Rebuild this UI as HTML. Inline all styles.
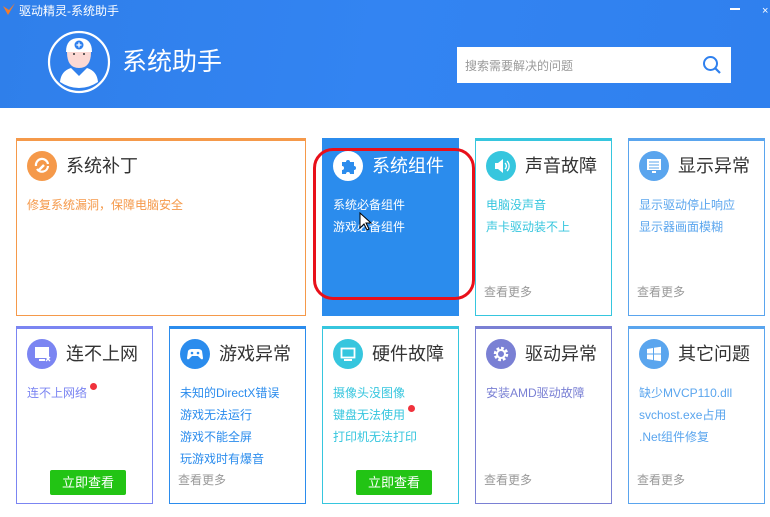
<!DOCTYPE html>
<html><head><meta charset="utf-8"><style>
*{margin:0;padding:0;box-sizing:border-box}
body{width:770px;height:517px;background:#fff;font-family:"Liberation Sans","Noto Sans CJK SC",sans-serif;position:relative;overflow:hidden}
.hdr{position:absolute;left:0;top:0;width:770px;height:108px;background:linear-gradient(100deg,#2f7fea 0%,#3384f2 50%,#2f80ee 100%)}
.tt{position:absolute;left:19px;top:2px;color:#fff;font-size:12px;line-height:18px}
.card{position:absolute;border:1px solid;border-top-width:3px;background:#fff}
.ic{position:absolute;left:10px;top:10px;width:30px;height:30px;border-radius:50%}
.ti{position:absolute;left:49px;top:11px;font-size:18px;line-height:28px;color:#333}
.lk{position:absolute;left:10px;font-size:12px;line-height:16px;white-space:nowrap}
.more{position:absolute;left:8px;bottom:15px;font-size:12px;color:#999}
.btn{position:absolute;left:33px;top:141px;width:76px;height:25px;background:#22c414;border-radius:2px;color:#fff;font-size:13px;text-align:center;line-height:25px}
.dot{display:inline-block;width:7px;height:7px;border-radius:50%;background:#f0323c;vertical-align:top;margin-left:3px;margin-top:-2px}
</style></head><body>
<div class="hdr">
<svg style="position:absolute;left:2px;top:2px" width="14" height="14" viewBox="0 0 14 14"><path d="M1 4 L6 13 L13 1 L7 8 Z" fill="#f57c2a"/></svg>
<div class="tt">驱动精灵-系统助手</div>
<div style="position:absolute;left:730px;top:8px;width:10px;height:2px;background:#fff"></div>
<div style="position:absolute;left:762px;top:5px;color:#fff;font-size:11px">×</div>
<svg style="position:absolute;left:47px;top:30px" width="64" height="64" viewBox="0 0 64 64">
<circle cx="32" cy="32" r="30" fill="none" stroke="#fff" stroke-width="2.2"/>
<path d="M19 22 Q19 8 32 8 Q45 8 45 22 Z" fill="#fff"/>
<circle cx="32" cy="15" r="4.5" fill="#2f80ee"/><path d="M32 12.5v5M29.5 15h5" stroke="#fff" stroke-width="1.3"/>
<path d="M20 22 H44 Q44 38 32 38 Q20 38 20 22Z" fill="#fcd9d4"/>
<circle cx="27" cy="24" r="1" fill="#333"/><circle cx="37" cy="24" r="1" fill="#333"/>
<path d="M13 52 Q14 41 24 38 L32 46 L40 38 Q50 41 51 52 Q42 58 32 58 Q22 58 13 52Z" fill="#fff"/>
</svg>
<div style="position:absolute;left:122px;top:46px;color:#fff;font-size:25px;line-height:32px">系统助手</div>
<div style="position:absolute;left:457px;top:47px;width:274px;height:36px;background:#fff">
<div style="position:absolute;left:8px;top:10px;font-size:12px;color:#999">搜索需要解决的问题</div>
<svg style="position:absolute;left:245px;top:8px" width="20" height="20" viewBox="0 0 20 20"><circle cx="8.5" cy="8.5" r="6.5" fill="none" stroke="#2f80ee" stroke-width="2"/><path d="M13.5 13.5L18 18" stroke="#2f80ee" stroke-width="2.2"/></svg>
</div>
</div>

<div class="card" style="left:16px;top:138px;width:290px;height:178px;border-color:#f5994a">
<div class="ic" style="background:#f5994a"><svg width="30" height="30" viewBox="0 0 30 30"><path d="M9 15 A6 6 0 0 1 21 13" fill="none" stroke="#fff" stroke-width="2.2"/><path d="M21 15 A6 6 0 0 1 10 18" fill="none" stroke="#fff" stroke-width="2.2"/><path d="M12 19l5-5" stroke="#fff" stroke-width="2.5"/></svg></div>
<div class="ti">系统补丁</div>
<div class="lk" style="top:56px;color:#f5994a">修复系统漏洞，保障电脑安全</div>
</div>

<div class="card" style="left:322px;top:138px;width:137px;height:178px;border-color:#2b8ced;background:#2b8ced">
<div class="ic" style="background:#fff"><svg width="30" height="30" viewBox="0 0 30 30"><path d="M9 11h4a2 2 0 1 1 4 0h4v4a2 2 0 1 1 0 4v4h-4a2 2 0 1 0-4 0H9v-4a2 2 0 1 0 0-4z" fill="#2b8ced"/></svg></div>
<div class="ti" style="color:#fff">系统组件</div>
<div class="lk" style="top:56px;color:#fff">系统必备组件</div>
<div class="lk" style="top:78px;color:#fff">游戏必备组件</div>
</div>
<div style="position:absolute;left:313px;top:148px;width:162px;height:152px;border:3px solid #e8101a;border-radius:20px"></div>
<svg style="position:absolute;left:359px;top:212px" width="14" height="20" viewBox="0 0 14 20"><path d="M1 1v15l4-4 3 6 2-1-3-6h5z" fill="#fff" stroke="#000" stroke-width="1"/></svg>

<div class="card" style="left:475px;top:138px;width:137px;height:178px;border-color:#36c6de">
<div class="ic" style="background:#36c6de"><svg width="30" height="30" viewBox="0 0 30 30"><path d="M9 12h3l5-4v14l-5-4H9z" fill="#fff"/><path d="M19 12a4 4 0 0 1 0 6M21 10a7 7 0 0 1 0 10" fill="none" stroke="#fff" stroke-width="1.3"/></svg></div>
<div class="ti">声音故障</div>
<div class="lk" style="top:56px;color:#36c6de">电脑没声音</div>
<div class="lk" style="top:78px;color:#36c6de">声卡驱动装不上</div>
<div class="more">查看更多</div>
</div>

<div class="card" style="left:628px;top:138px;width:137px;height:178px;border-color:#5aa5ee">
<div class="ic" style="background:#5aa5ee"><svg width="30" height="30" viewBox="0 0 30 30"><rect x="8" y="8" width="14" height="11" fill="#fff"/><path d="M10 11h10M10 14h10M10 17h10" stroke="#5aa5ee"/><rect x="13" y="20" width="4" height="2" fill="#fff"/></svg></div>
<div class="ti">显示异常</div>
<div class="lk" style="top:56px;color:#5aa5ee">显示驱动停止响应</div>
<div class="lk" style="top:78px;color:#5aa5ee">显示器画面模糊</div>
<div class="more">查看更多</div>
</div>

<div class="card" style="left:16px;top:326px;width:137px;height:178px;border-color:#7b85f2">
<div class="ic" style="background:#7b85f2"><svg width="30" height="30" viewBox="0 0 30 30"><rect x="8" y="8" width="14" height="11" fill="#fff"/><rect x="12" y="20" width="6" height="2" fill="#fff"/><path d="M19 18l4 4M23 18l-4 4" stroke="#fff" stroke-width="1.3"/></svg></div>
<div class="ti">连不上网</div>
<div class="lk" style="top:56px;color:#7b85f2">连不上网络<span class="dot"></span></div>
<div class="btn">立即查看</div>
</div>

<div class="card" style="left:169px;top:326px;width:137px;height:178px;border-color:#2b8ced">
<div class="ic" style="background:#2b8ced"><svg width="30" height="30" viewBox="0 0 30 30"><path d="M8 12q1-2 4-2h6q3 0 4 2l1 7q0 2-2 1l-3-3h-6l-3 3q-2 1-2-1z" fill="#fff"/><circle cx="12" cy="14" r="1.3" fill="#2b8ced"/><circle cx="18" cy="14" r="1.3" fill="#2b8ced"/></svg></div>
<div class="ti">游戏异常</div>
<div class="lk" style="top:56px;color:#2b8ced">未知的DirectX错误</div>
<div class="lk" style="top:78px;color:#2b8ced">游戏无法运行</div>
<div class="lk" style="top:100px;color:#2b8ced">游戏不能全屏</div>
<div class="lk" style="top:122px;color:#2b8ced">玩游戏时有爆音</div>
<div class="more">查看更多</div>
</div>

<div class="card" style="left:322px;top:326px;width:137px;height:178px;border-color:#36c6de">
<div class="ic" style="background:#36c6de"><svg width="30" height="30" viewBox="0 0 30 30"><rect x="8.5" y="9.5" width="13" height="9" fill="none" stroke="#fff" stroke-width="1.8"/><rect x="11" y="20" width="8" height="2" fill="#fff"/></svg></div>
<div class="ti">硬件故障</div>
<div class="lk" style="top:56px;color:#36c6de">摄像头没图像</div>
<div class="lk" style="top:78px;color:#36c6de">键盘无法使用<span class="dot"></span></div>
<div class="lk" style="top:100px;color:#36c6de">打印机无法打印</div>
<div class="btn">立即查看</div>
</div>

<div class="card" style="left:475px;top:326px;width:137px;height:178px;border-color:#7a80d4">
<div class="ic" style="background:#7a80d4"><svg width="30" height="30" viewBox="0 0 30 30"><circle cx="15" cy="15" r="5.5" fill="none" stroke="#fff" stroke-width="3.5" stroke-dasharray="2.6 1.7"/><circle cx="15" cy="15" r="4" fill="none" stroke="#fff" stroke-width="2"/></svg></div>
<div class="ti">驱动异常</div>
<div class="lk" style="top:56px;color:#7a80d4">安装AMD驱动故障</div>
<div class="more">查看更多</div>
</div>

<div class="card" style="left:628px;top:326px;width:137px;height:178px;border-color:#5aa5ee">
<div class="ic" style="background:#5aa5ee"><svg width="30" height="30" viewBox="0 0 30 30"><path d="M8 10l6-1v5.5H8zM15 8.8l7-1v6.7h-7zM8 15.5h6v5.5l-6-1zM15 15.5h7v6.7l-7-1z" fill="#fff"/></svg></div>
<div class="ti">其它问题</div>
<div class="lk" style="top:56px;color:#5aa5ee">缺少MVCP110.dll</div>
<div class="lk" style="top:78px;color:#5aa5ee">svchost.exe占用</div>
<div class="lk" style="top:100px;color:#5aa5ee">.Net组件修复</div>
<div class="more">查看更多</div>
</div>
</body></html>
